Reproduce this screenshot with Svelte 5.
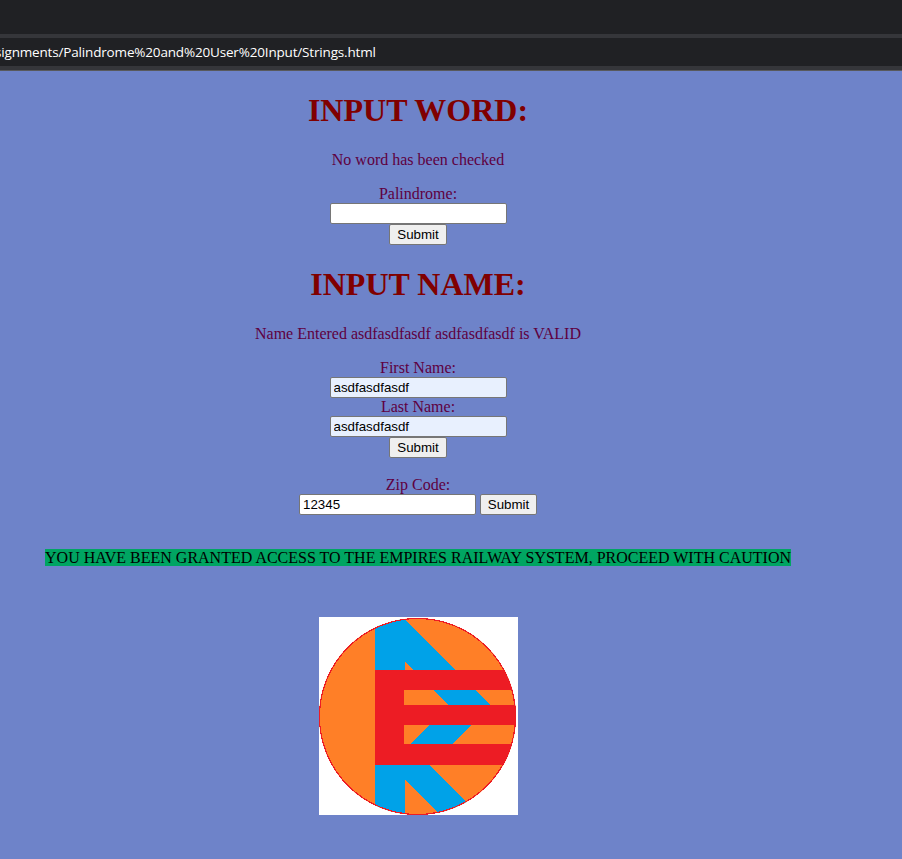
<script>
  let word = $state('');
  let first = $state('asdfasdfasdf');
  let last = $state('asdfasdfasdf');
  let zip = $state('12345');
</script>

<div class="window">
  <header>
    <div class="tabs"></div>
    <div class="address"><span>signments/Palindrome%20and%20User%20Input/Strings.html</span></div>
  </header>

  <main>
    <h1>INPUT WORD:</h1>
    <p>No word has been checked</p>
    <form onsubmit={(e) => e.preventDefault()}>
      <label for="word">Palindrome:</label>
      <input id="word" type="text" bind:value={word} />
      <button>Submit</button>
    </form>

    <h1>INPUT NAME:</h1>
    <p>Name Entered asdfasdfasdf asdfasdfasdf is VALID</p>
    <form onsubmit={(e) => e.preventDefault()}>
      <label for="first">First Name:</label>
      <input id="first" class="filled" type="text" bind:value={first} />
      <label for="last">Last Name:</label>
      <input id="last" class="filled" type="text" bind:value={last} />
      <button>Submit</button>
    </form>

    <form class="zip" onsubmit={(e) => e.preventDefault()}>
      <label for="zip">Zip Code:</label>
      <div class="row">
        <input id="zip" type="text" bind:value={zip} />
        <button>Submit</button>
      </div>
    </form>

    <div class="message"><span>YOU HAVE BEEN GRANTED ACCESS TO THE EMPIRES RAILWAY SYSTEM, PROCEED WITH CAUTION</span></div>

    <svg class="logo" width="199" height="198" viewBox="0 0 199 198" shape-rendering="crispEdges">
      <defs>
        <clipPath id="disc"><circle cx="98.5" cy="99.5" r="98.5" /></clipPath>
      </defs>
      <rect width="199" height="198" fill="#fff" />
      <g clip-path="url(#disc)">
        <rect width="199" height="198" fill="#ff7f27" />
        <path d="M56 0H84L171.500 88.500L132 128H91L129 88L86 44V60H84V140H86V198H56Z" fill="#00a2e8" />
        <path d="M80 138H100L160 198H121L86 163Z" fill="#00a2e8" />
      </g>
      <circle cx="98.500" cy="99.500" r="98" fill="none" stroke="#ed1c24" stroke-width="1.200" />
      <g clip-path="url(#disc)">
        <path d="M56 53H199V73H85V88H199V108H85V127H199V148H56Z" fill="#ed1c24" />
      </g>
    </svg>
  </main>
</div>

<style>
  :global(body) {
    margin: 0;
  }
  .window {
    width: 902px;
    height: 859px;
    overflow: hidden;
    background: #6e83c9;
    font: 16px/18px 'Liberation Serif', serif;
    color: #5e0040;
  }
  header {
    box-sizing: border-box;
    height: 71px;
    background: #35363a;
    border-bottom: 1px solid #58595c;
  }
  .tabs {
    height: 34px;
    margin-bottom: 4px;
    background: #202124;
  }
  .address {
    height: 28px;
    overflow: hidden;
    background: #202124;
    color: #fff;
    font: 13.5px/29px 'Open Sans', sans-serif;
    white-space: nowrap;
  }
  .address span {
    margin-left: -5px;
    letter-spacing: -0.17px;
  }
  main {
    width: 836px;
    display: flex;
    flex-direction: column;
    align-items: center;
  }
  h1 {
    margin: 21px 0 22px;
    height: 37px;
    font-size: 32px;
    line-height: 37px;
    font-weight: bold;
    color: #800000;
  }
  p {
    margin: 0 0 16px;
    height: 18px;
  }
  form {
    display: flex;
    flex-direction: column;
    align-items: center;
  }
  label {
    height: 18px;
  }
  input,
  button {
    box-sizing: border-box;
    height: 21px;
    border: 1px solid #767676;
    border-radius: 2px;
    margin: 0;
    font: 13.333px/15px 'Liberation Sans', sans-serif;
    color: #000;
  }
  input {
    width: 177px;
    padding: 1px 2px 1px 3px;
    background: #fff;
  }
  .filled {
    background: #e8f0fe;
  }
  button {
    width: 58px;
    padding: 1px 6px;
    background: #efefef;
  }
  .zip {
    margin-top: 18px;
  }
  .row {
    display: flex;
    gap: 4px;
  }
  .row button {
    width: 57px;
  }
  .message {
    margin-top: 34px;
    height: 18px;
    color: #000;
    white-space: nowrap;
  }
  .message span {
    background: #00a562;
  }
  .logo {
    display: block;
    margin-top: 50px;
  }
</style>
